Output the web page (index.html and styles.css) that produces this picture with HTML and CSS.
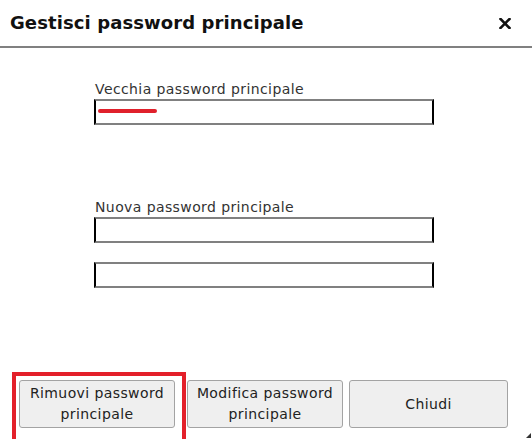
FILE: index.html
```html
<!DOCTYPE html>
<html lang="it">
<head>
  <meta charset="UTF-8">
  <title>Gestisci password principale</title>
  <link rel="stylesheet" href="styles.css">
</head>
<body>
  <div class="dialog">
    <div class="dialog-header">
      <h1>Gestisci password principale</h1>
      <button class="close" aria-label="Chiudi">
        <svg width="12" height="11" viewBox="0 0 12 11">
          <path d="M1.5 1 L10.5 10 M10.5 1 L1.5 10" stroke="#111" stroke-width="2.6" stroke-linecap="square"/>
        </svg>
      </button>
    </div>

    <form class="pw-form">
      <label class="field-label" for="oldPw">Vecchia password principale</label>
      <div class="field redacted">
        <input type="password" id="oldPw">
        <span class="scribble"></span>
      </div>

      <label class="field-label second" for="newPw">Nuova password principale</label>
      <div class="field">
        <input type="password" id="newPw">
      </div>
      <div class="field repeat">
        <input type="password" id="newPw2">
      </div>
    </form>

    <div class="dialog-footer">
      <div class="highlight">
        <button class="btn">Rimuovi password principale</button>
      </div>
      <button class="btn">Modifica password principale</button>
      <button class="btn wide">Chiudi</button>
    </div>

    <!-- window resize grip -->
    <svg class="grip" width="5" height="5" viewBox="0 0 5 5">
      <path d="M5 0 L5 5 L0 5 Z" fill="#333"/>
    </svg>
  </div>
</body>
</html>
```

FILE: styles.css
```css
html, body {
  margin: 0;
  height: 100%;
  background: #fff;
  overflow: hidden;
}

body {
  font-family: 'DejaVu Sans', Verdana, sans-serif;
  color: #222;
}

.dialog {
  position: relative;
  height: 439px;
  display: flex;
  flex-direction: column;
}

/* header */
.dialog-header {
  height: 46px;
  display: flex;
  align-items: center;
  justify-content: space-between;
  padding: 0 20px 0 10px;
  border-bottom: 2px solid #808080;
}
.dialog-header h1 {
  margin: 0;
  font-size: 18px;
  font-weight: bold;
  color: #111;
  line-height: 46px;
  letter-spacing: 0.1px;
}
.close {
  border: none;
  background: none;
  padding: 0;
  width: 14px;
  height: 14px;
  display: flex;
  align-items: center;
  justify-content: center;
}

/* form */
.pw-form {
  margin: 0 0 0 94px;
  width: 340px;
  padding-top: 33px;
  display: flex;
  flex-direction: column;
}
.field-label {
  font-size: 14px;
  line-height: 17px;
  letter-spacing: 0.4px;
  color: #333;
  padding-left: 1px;
}
.field-label.second {
  margin-top: 74px;
}
.field {
  position: relative;
  margin-top: 1px;
}
.field.repeat {
  margin-top: 19px;
}
.field input {
  display: block;
  box-sizing: border-box;
  width: 340px;
  height: 26px;
  margin: 0;
  border: 2px solid;
  border-color: #808080 #000 #808080 #000;
  background: #fff;
  outline: none;
}
.scribble {
  position: absolute;
  left: 4px;
  top: 10px;
  width: 59px;
  height: 4px;
  border-radius: 2px;
  background: #e0202b;
}

/* footer buttons */
.dialog-footer {
  margin-top: auto;
  padding: 0 0 11px 19px;
  display: flex;
  align-items: flex-start;
}
.btn {
  box-sizing: border-box;
  width: 156px;
  height: 48px;
  padding: 0 4px;
  background: #efefef;
  border: 1px solid #a3a3a3;
  border-radius: 3px;
  font-family: 'DejaVu Sans', Verdana, sans-serif;
  font-size: 14px;
  line-height: 21px;
  letter-spacing: 0.4px;
  color: #222;
  margin-left: 6px;
}
.btn.wide {
  width: 159px;
}
.highlight {
  position: relative;
  margin-right: 6px;
}
.highlight .btn {
  margin-left: 0;
}
.highlight::after {
  content: '';
  position: absolute;
  left: -7px;
  top: -8px;
  right: -11px;
  bottom: -16px;
  border: 4px solid #e3202a;
  pointer-events: none;
}

.grip {
  position: absolute;
  right: 1px;
  bottom: 1px;
}
```
